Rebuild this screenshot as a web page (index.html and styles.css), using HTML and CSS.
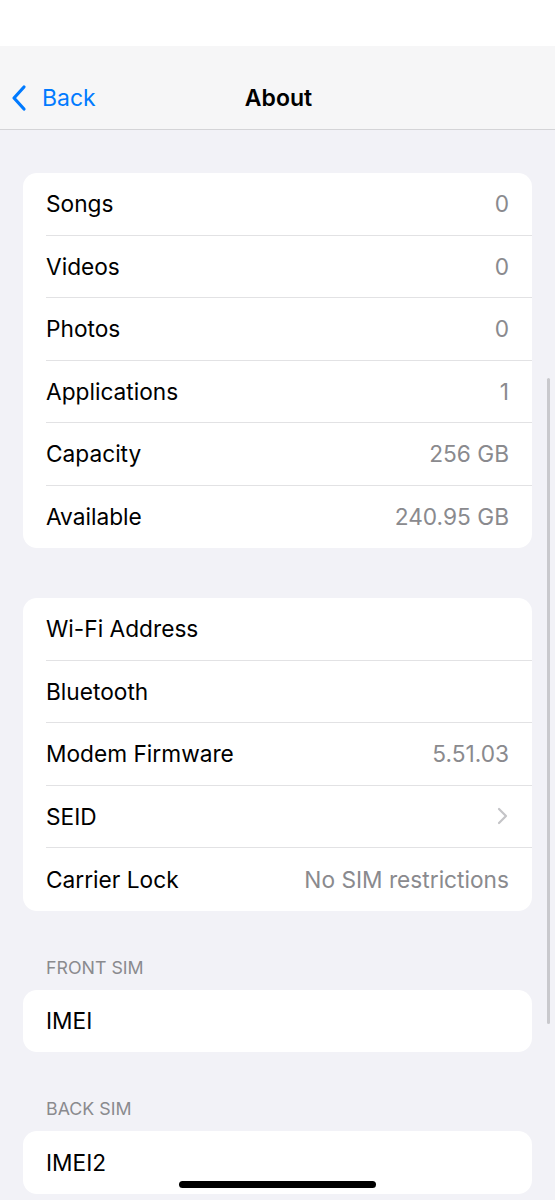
FILE: index.html
```html
<!DOCTYPE html>
<html lang="en">
<head>
    <meta charset="UTF-8">
    <meta name="viewport" content="width=device-width, initial-scale=1.0">
    <title>About</title>
    <link rel="stylesheet" href="styles.css">
</head>
<body>
    <div class="screen">
        <div class="status-bar"></div>
        <div class="nav-bar">
            <a class="back" href="#">
                <svg class="back-chevron" width="18" height="28" viewBox="0 0 18 28">
                    <path d="M14 3 L4 14 L14 25" fill="none" stroke="#007aff" stroke-width="3.2" stroke-linecap="round" stroke-linejoin="round"/>
                </svg>
                <span>Back</span>
            </a>
            <div class="nav-title">About</div>
        </div>

        <div class="content">
            <div class="group">
                <div class="row"><span class="label">Songs</span><span class="value">0</span></div>
                <div class="row"><span class="label">Videos</span><span class="value">0</span></div>
                <div class="row"><span class="label">Photos</span><span class="value">0</span></div>
                <div class="row"><span class="label">Applications</span><span class="value">1</span></div>
                <div class="row"><span class="label">Capacity</span><span class="value">256 GB</span></div>
                <div class="row"><span class="label">Available</span><span class="value">240.95 GB</span></div>
            </div>

            <div class="group second">
                <div class="row"><span class="label">Wi-Fi Address</span><span class="value"></span></div>
                <div class="row"><span class="label">Bluetooth</span><span class="value"></span></div>
                <div class="row"><span class="label">Modem Firmware</span><span class="value">5.51.03</span></div>
                <div class="row"><span class="label">SEID</span>
                    <svg class="chevron" width="12" height="18" viewBox="0 0 12 18">
                        <path d="M3 2 L10 9 L3 16" fill="none" stroke="#c4c4c7" stroke-width="2.2" stroke-linecap="round" stroke-linejoin="round"/>
                    </svg>
                </div>
                <div class="row"><span class="label">Carrier Lock</span><span class="value">No SIM restrictions</span></div>
            </div>

            <div class="section-header">FRONT SIM</div>
            <div class="group">
                <div class="row"><span class="label">IMEI</span><span class="value"></span></div>
            </div>

            <div class="section-header">BACK SIM</div>
            <div class="group">
                <div class="row"><span class="label">IMEI2</span><span class="value"></span></div>
            </div>
        </div>

        <div class="scroll-indicator"></div>
        <div class="home-indicator"></div>
    </div>
</body>
</html>
```

FILE: styles.css
```css
body {
    margin: 0;
    padding: 0;
    font-family: Inter, "Noto Sans", sans-serif;
    background-color: #f2f2f7;
    color: #000;
}

.screen {
    position: relative;
    width: 555px;
    height: 1200px;
    overflow: hidden;
}

.status-bar {
    height: 46px;
    background-color: #fff;
}

.nav-bar {
    position: relative;
    height: 84px;
    padding-top: 20px;
    box-sizing: border-box;
    background-color: #f6f6f7;
    border-bottom: 1px solid #d4d4d7;
    display: flex;
    align-items: center;
    justify-content: center;
}

.back {
    position: absolute;
    left: 10px;
    top: 20px;
    bottom: 0;
    display: flex;
    align-items: center;
    gap: 14px;
    color: #007aff;
    text-decoration: none;
    font-size: 23px;
}

.nav-title {
    font-size: 23px;
    font-weight: 600;
    margin-left: 2px;
}

.content {
    padding: 43px 23px 0;
}

.group {
    background-color: #fff;
    border-radius: 14px;
    overflow: hidden;
}

.group.second {
    margin-top: 50px;
}

.row {
    height: 62.5px;
    margin-left: 23px;
    padding-right: 23px;
    display: flex;
    align-items: center;
    justify-content: space-between;
    border-bottom: 1px solid #e2e2e4;
    box-sizing: border-box;
    font-size: 22.7px;
}

.row:last-child {
    border-bottom: none;
}

.value {
    color: #8a8a8e;
}

.chevron {
    margin-right: 1px;
}

.section-header {
    padding: 47px 0 12px 23px;
    line-height: 20px;
    font-size: 17.8px;
    color: #8a8a8e;
}

.scroll-indicator {
    position: absolute;
    right: 5px;
    top: 378px;
    width: 3px;
    height: 646px;
    border-radius: 2px;
    background-color: #c9c9cd;
}

.home-indicator {
    position: absolute;
    left: 179px;
    top: 1181px;
    width: 197px;
    height: 7px;
    border-radius: 4px;
    background-color: #000;
}
```
